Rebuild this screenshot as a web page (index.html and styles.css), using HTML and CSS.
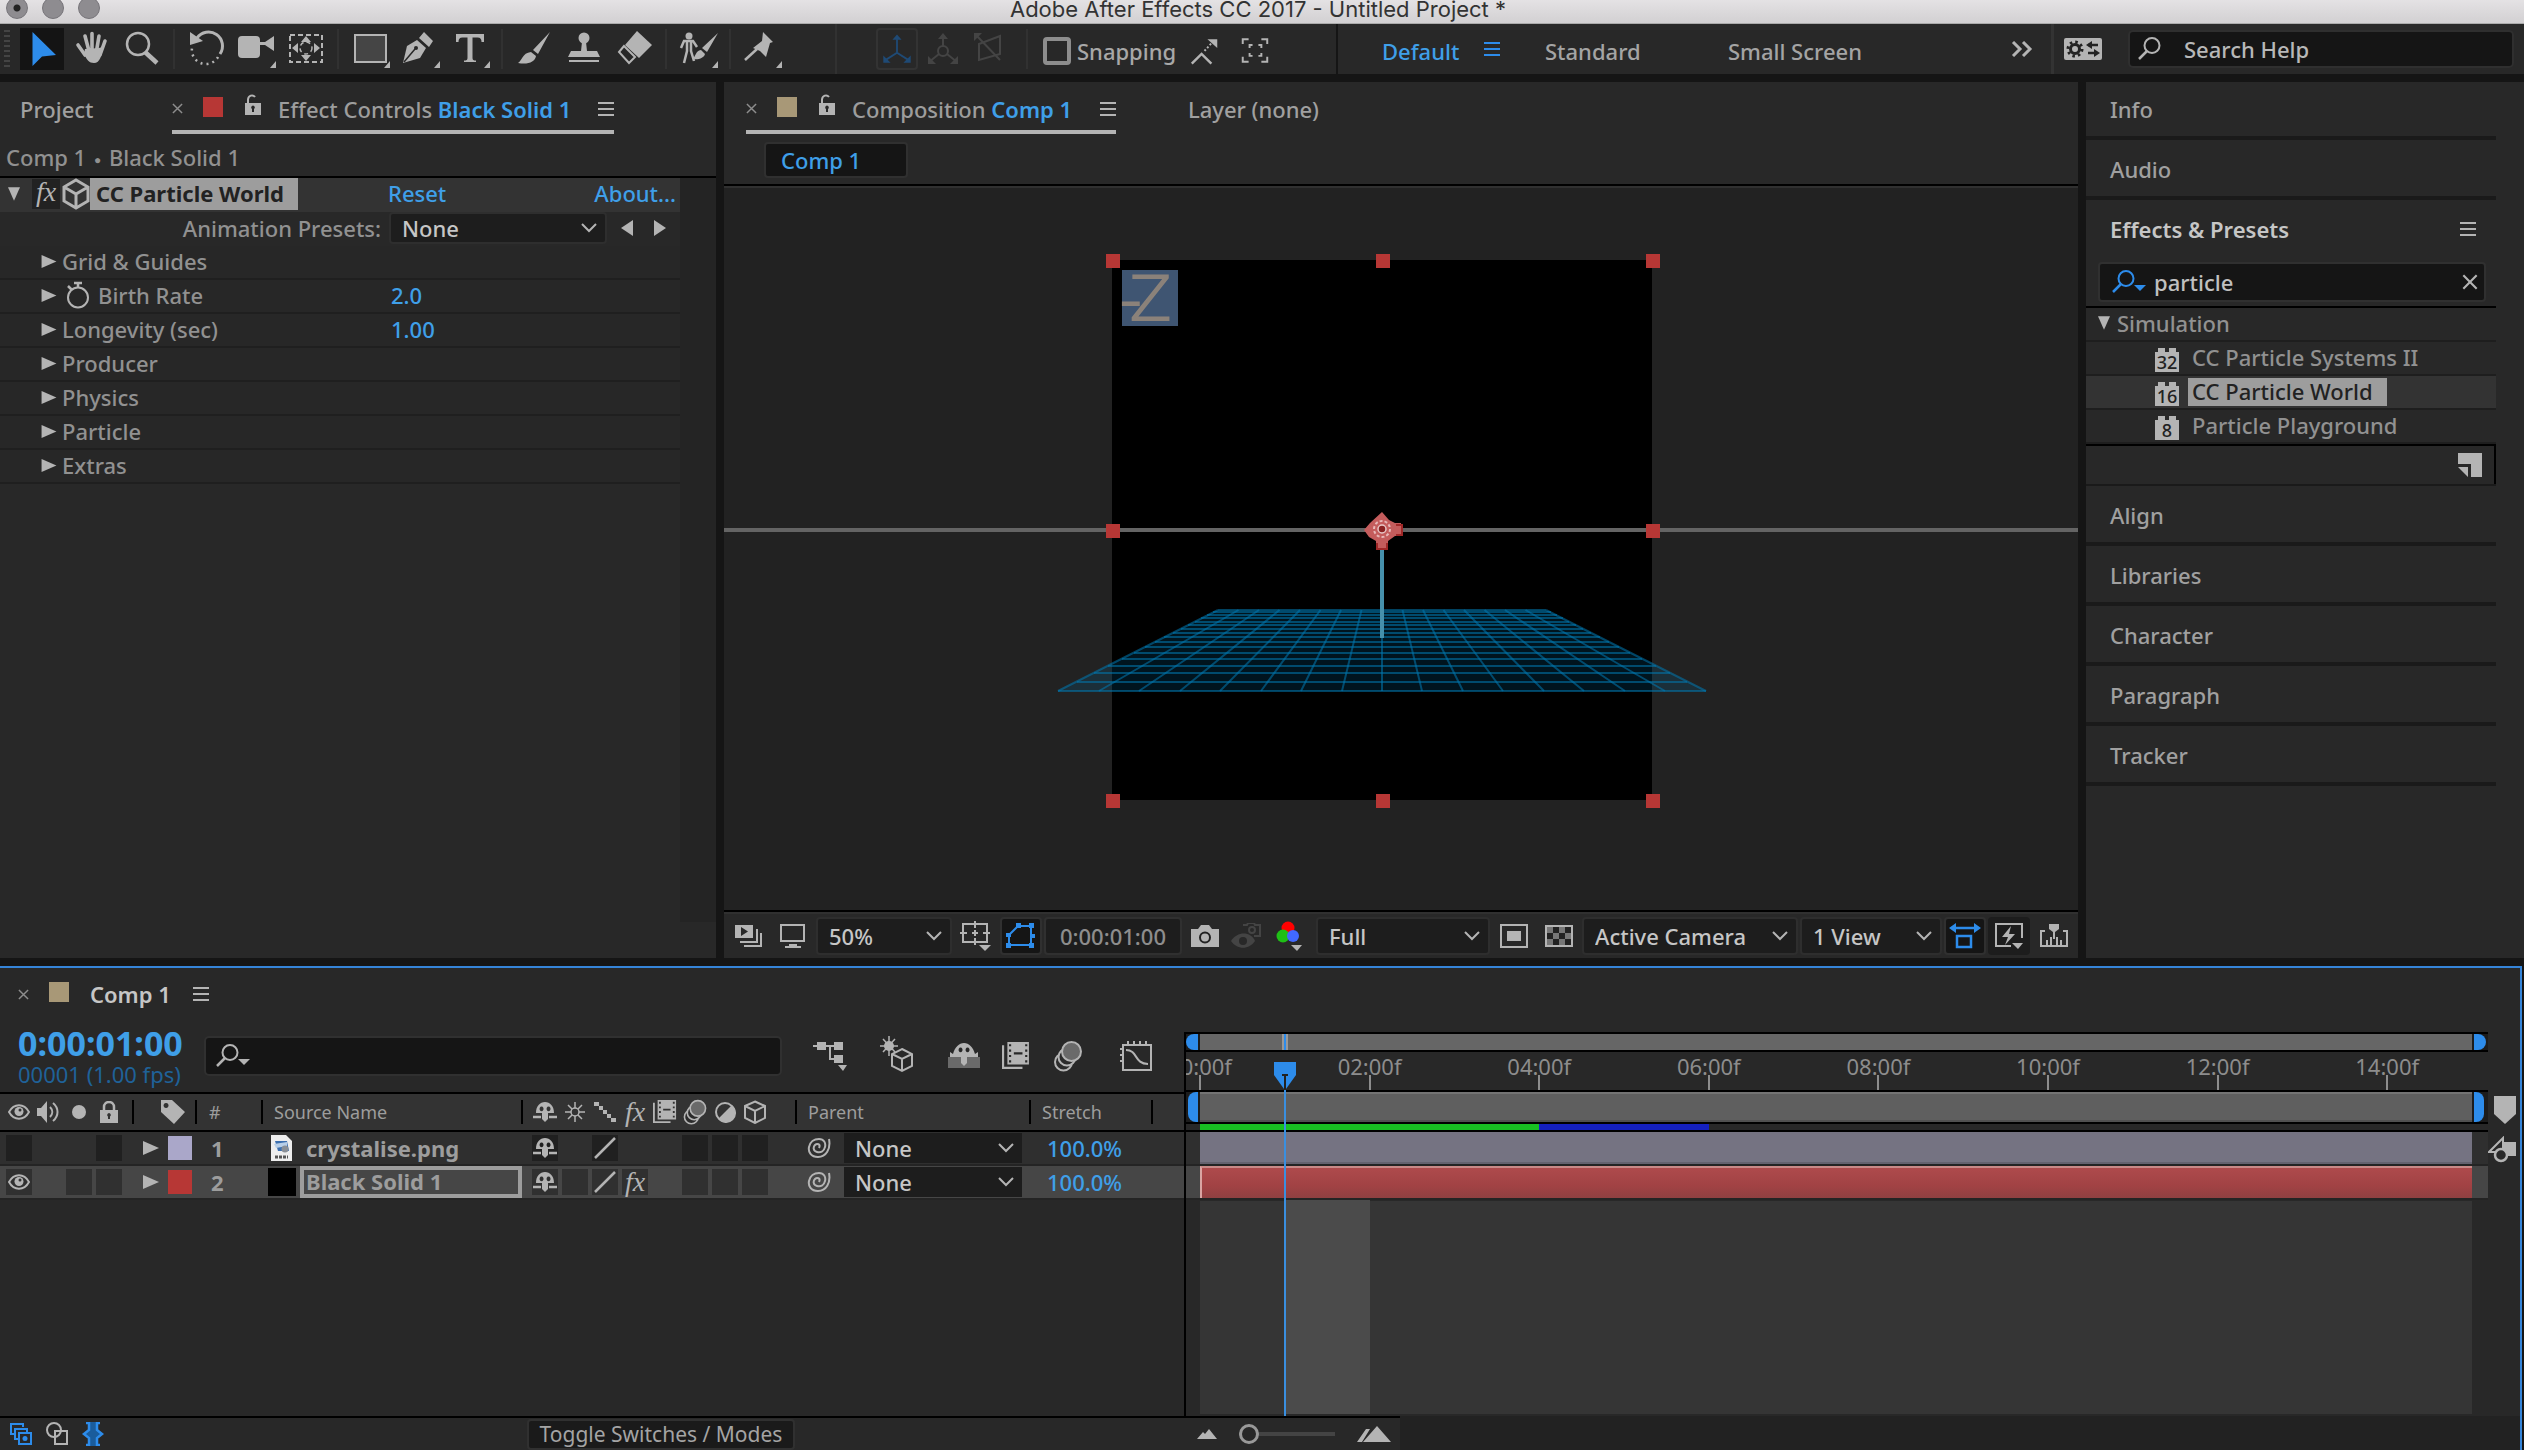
FILE: index.html
```html
<!DOCTYPE html>
<html lang="en">
<head>
<meta charset="utf-8">
<title>Adobe After Effects CC 2017 - Untitled Project *</title>
<link rel="stylesheet" href="styles.css">
</head>
<body>
<svg class="defs" aria-hidden="true">
  <symbol id="i-menu" viewBox="0 0 16 14"><path d="M0 1h16M0 7h16M0 13h16" stroke="currentColor" stroke-width="2"/></symbol>
  <symbol id="i-close" viewBox="0 0 12 12"><path d="M1 1l10 10M11 1L1 11" stroke="currentColor" stroke-width="1.6"/></symbol>
  <symbol id="i-lock" viewBox="0 0 18 22"><path d="M4 10V5.500A4 4.500 0 0 1 11 3" fill="none" stroke="currentColor" stroke-width="2"/><path fill="currentColor" fill-rule="evenodd" d="M1 9h16v12H1zM9 11.500a2 2 0 0 0-1 3.600V18h2v-2.900a2 2 0 0 0-1-3.600z"/></symbol>
  <symbol id="i-chev" viewBox="0 0 16 10"><path d="M1 1l7 7 7-7" fill="none" stroke="currentColor" stroke-width="2"/></symbol>
  <symbol id="i-right" viewBox="0 0 16 14"><path d="M0 0l16 7-16 7z" fill="currentColor"/></symbol>
  <symbol id="i-down" viewBox="0 0 14 16"><path d="M0 0h14L7 16z" fill="currentColor"/></symbol>
  <symbol id="i-search" viewBox="0 0 34 24"><circle cx="14" cy="8.500" r="7.500" fill="none" stroke="currentColor" stroke-width="2"/><path d="M9 14l-8 8" stroke="currentColor" stroke-width="2.500"/></symbol>
  <symbol id="i-searchmenu" viewBox="0 0 34 24"><circle cx="14" cy="8.500" r="7.500" fill="none" stroke="currentColor" stroke-width="2"/><path d="M9 14l-8 8" stroke="currentColor" stroke-width="2.500"/><path d="M22 15h12l-6 6z" fill="currentColor"/></symbol>
  <symbol id="i-cube" viewBox="0 0 28 32"><path d="M14 2l12 7v14l-12 7-12-7V9zM2 9l12 7 12-7M14 16v14" fill="none" stroke="currentColor" stroke-width="3"/></symbol>
  <symbol id="i-cubethin" viewBox="0 0 24 24"><path d="M12 1.500l10 4.500v12l-10 5-10-5V6zM2 6l10 5 10-5M12 11v12" fill="none" stroke="currentColor" stroke-width="2"/></symbol>
  <symbol id="i-shy" viewBox="0 0 24 20"><path fill="currentColor" fill-rule="evenodd" d="M3 11C3 4 7 0 12 0s9 4 9 11zM8.500 4.500a2 2.400 0 1 0 .1 0zM15.500 4.500a2 2.400 0 1 0 .1 0z"/><path d="M0 15h8M16 15h8" stroke="currentColor" stroke-width="2.500"/><path d="M9 10h6v7l-3 3-3-3z" fill="currentColor"/></symbol>
  <symbol id="i-slash" viewBox="0 0 24 24"><path d="M2 22L22 2" stroke="currentColor" stroke-width="2.500"/></symbol>
  <symbol id="i-eye" viewBox="0 0 22 16"><path d="M1 8c5-9 15-9 20 0-5 9-15 9-20 0z" fill="none" stroke="currentColor" stroke-width="2"/><circle cx="11" cy="7.500" r="4.500" fill="currentColor"/><circle cx="12" cy="6" r="1.500" fill="#333"/></symbol>
  <symbol id="i-whip" viewBox="0 0 24 24"><path d="M22 3c2 10-3 18-11 18C4 21 1 16 2 11S7 3 12 3s7 4 6 8-4 6-8 5-4-5-2-7 6-1 4 3" fill="none" stroke="currentColor" stroke-width="2"/></symbol>
  <symbol id="i-film" viewBox="0 0 26 26"><path d="M1 3v21h18" fill="none" stroke="currentColor" stroke-width="2"/><path fill="currentColor" fill-rule="evenodd" d="M5 0h20v21H5zM6.500 2v2h2V2zm0 5v2h2V7zm0 5v2h2v-2zm0 5v2h2v-2zM21.500 2v2h2V2zm0 5v2h2V7zm0 5v2h2v-2zm0 5v2h2v-2zM11 9.500v2h8v-2z"/></symbol>
  <symbol id="i-blur" viewBox="0 0 28 32"><circle cx="9.500" cy="22" r="8.500" fill="#2b2b2b" stroke="currentColor" stroke-width="2"/><circle cx="13" cy="17" r="8.500" fill="#2b2b2b" stroke="currentColor" stroke-width="2"/><circle cx="17.500" cy="11.500" r="9.500" fill="#6a6a6a" stroke="currentColor" stroke-width="2"/></symbol>
</svg>

<header class="titlebar">
  <div class="lights"><span class="light light-dot"></span><span class="light"></span><span class="light"></span></div>
  <h1 class="title">Adobe After Effects CC 2017 - Untitled Project *</h1>
</header>

<nav class="toolbar" aria-label="Tools">
  <span class="grip"></span>
  <button class="tool tool-on" aria-label="Selection"><svg viewBox="0 0 50 50"><path d="M15.500 8l23.500 23-14 1.500-9.500 9.500z" fill="#2d8ceb"/></svg></button>
  <button class="tool" aria-label="Hand"><svg viewBox="0 0 50 50"><g stroke="currentColor" stroke-width="3.600" stroke-linecap="round" fill="none"><path d="M18 12l4 15M25 9.500V26M32 12l-2.500 15M11 21l7 10M38 17l-5 14"/></g><path d="M18 25l14-1 4-1c-1 8-3 16-9 16-5 0-7-3-10-9z" fill="currentColor"/></svg></button>
  <button class="tool" aria-label="Zoom"><svg viewBox="0 0 50 50"><circle cx="21" cy="20" r="11" fill="none" stroke="currentColor" stroke-width="2.500"/><path d="M28 28l12 11" stroke="currentColor" stroke-width="4.500"/></svg></button>
  <span class="sep"></span>
  <button class="tool" aria-label="Rotate"><svg viewBox="0 0 50 50"><path d="M16 14a14 14 0 0 1 23 16" fill="none" stroke="currentColor" stroke-width="3"/><path d="M37 33a14 14 0 0 1-26-9" fill="none" stroke="currentColor" stroke-width="2.500" stroke-dasharray="2 4"/><path d="M9 8v13l13-4z" fill="currentColor"/></svg></button>
  <button class="tool" aria-label="Camera"><svg viewBox="0 0 50 50"><rect x="7" y="12" width="22" height="22" rx="4" fill="currentColor"/><path d="M29 18h5l9-6v15l-9-6h-5zM45 37v7h-6z" fill="currentColor"/></svg></button>
  <button class="tool" aria-label="Pan behind"><svg viewBox="0 0 50 50"><rect x="9" y="11" width="32" height="27" fill="none" stroke="currentColor" stroke-width="2" stroke-dasharray="5 3"/><path d="M25 12l5 6H20zM25 37l5-6H20zM11 24l6-5v10zM39 24l-6-5v10z" fill="currentColor"/><circle cx="25" cy="24" r="6" fill="none" stroke="currentColor" stroke-width="1.500" stroke-dasharray="4 3"/></svg></button>
  <span class="sep"></span>
  <button class="tool" aria-label="Rectangle"><svg viewBox="0 0 50 50"><rect x="10" y="11" width="31" height="27" fill="#454545" stroke="currentColor" stroke-width="2"/><path d="M45 37v7h-6z" fill="currentColor"/></svg></button>
  <button class="tool" aria-label="Pen"><svg viewBox="0 0 50 50"><path d="M8 39l4-17 10-6 9 8-6 10z" fill="currentColor"/><path d="M9 38l11-13" stroke="#282828" stroke-width="1.500"/><circle cx="21" cy="24" r="2" fill="#282828"/><path d="M24 14l5-6 9 9-4 6zM45 37v7h-6z" fill="currentColor"/></svg></button>
  <button class="tool" aria-label="Type"><svg viewBox="0 0 50 50"><path d="M11 10h28v8h-2.500c0-3-1-4.500-4-4.500H27.500V34c0 2 1 2.500 3.500 2.500V38H19v-1.500c2.500 0 3.500-.5 3.500-2.500V13.500H17.500c-3 0-4 1.500-4 4.500H11zM45 37v7h-6z" fill="currentColor"/></svg></button>
  <span class="sep"></span>
  <button class="tool" aria-label="Brush"><svg viewBox="0 0 50 50"><path d="M41 8L29 30l-5-4zM22 28l5 4c-1 6-8 9-18 7 4-2 4-10 13-11z" fill="currentColor"/></svg></button>
  <button class="tool" aria-label="Clone stamp"><svg viewBox="0 0 50 50"><circle cx="25" cy="14" r="5.500" fill="currentColor"/><path d="M23 18h4l1 9h10l3 6H9l3-6h10zM10 36h30v2H10z" fill="currentColor"/></svg></button>
  <button class="tool" aria-label="Eraser"><svg viewBox="0 0 50 50"><path d="M28 7l15 14-13 13-14-13z" fill="currentColor"/><path d="M15 22l-5 6 10 11 6-6z" fill="none" stroke="currentColor" stroke-width="2"/></svg></button>
  <span class="sep"></span>
  <button class="tool" aria-label="Roto brush"><svg viewBox="0 0 50 50"><circle cx="16" cy="12" r="3.500" fill="currentColor"/><path d="M8 24l3-7h9l4 6M14 17v10l-3 12M18 17v10l3 10" fill="none" stroke="currentColor" stroke-width="2.500"/><path d="M45 9L34 28l-5-4zM28 26l4 4c-1 4-6 6-13 5 4-2 3-8 9-9zM45 37v7h-6z" fill="currentColor"/></svg></button>
  <span class="sep"></span>
  <button class="tool" aria-label="Puppet pin"><svg viewBox="0 0 50 50"><path d="M26 8l10 10-3 1-4 14-6-6-7-3 9-7z" fill="currentColor"/><path d="M20 25L8 36" stroke="currentColor" stroke-width="2.500"/><path d="M45 37v7h-6z" fill="currentColor"/></svg></button>
  <span class="sep sep-strong"></span>
  <button class="tool axis axis-on" aria-label="Local axis"><svg viewBox="0 0 46 50"><path d="M23 12v17L9 38M23 29l14 9" fill="none" stroke="currentColor" stroke-width="2"/><path d="M23 9l5 6H18zM8 32v8h8zM38 32v8h-8z" fill="currentColor"/></svg></button>
  <button class="tool axis" aria-label="World axis"><svg viewBox="0 0 46 50"><path d="M23 12v11M19 30L9 38M27 30l10 8" fill="none" stroke="currentColor" stroke-width="2"/><circle cx="23" cy="27" r="5" fill="none" stroke="currentColor" stroke-width="2"/><path d="M23 9l5 6H18zM8 32v8h8zM38 32v8h-8z" fill="currentColor"/></svg></button>
  <button class="tool axis" aria-label="View axis"><svg viewBox="0 0 46 50"><path d="M13 20l21-8v18l-21 6zM10 11l24 25" fill="none" stroke="currentColor" stroke-width="2"/><path d="M8 9h8l-8 8z" fill="currentColor"/></svg></button>
  <span class="sep sep-axis"></span>
  <label class="snap"><input type="checkbox" class="snap-box">Snapping</label>
  <button class="tool tool-mini" aria-label="Snap to edges"><svg viewBox="0 0 50 50"><path d="M11 40l10-10 10 10" fill="none" stroke="currentColor" stroke-width="2.500"/><path d="M24 27l8-9" stroke="currentColor" stroke-width="2" stroke-dasharray="2 2"/><path d="M27 15h10v9z" fill="currentColor"/></svg></button>
  <button class="tool tool-mini" aria-label="Snap to features"><svg viewBox="0 0 50 50"><path d="M13 20v-5h6M32 15h6v5M38 33v5h-6M19 38h-6v-5M20 24v-3h3M29 21h3v3M32 29v3h-3M23 32h-3v-3" fill="none" stroke="currentColor" stroke-width="2"/></svg></button>
  <div class="workspaces">
    <a class="ws ws-on" href="#">Default</a>
    <button class="ws-menu" aria-label="Workspace menu"><svg width="16" height="14"><use href="#i-menu"/></svg></button>
    <a class="ws ws-standard" href="#">Standard</a>
    <a class="ws ws-small" href="#">Small Screen</a>
    <button class="more" aria-label="More workspaces"><svg width="22" height="16" viewBox="0 0 22 16"><path d="M2 1l7 7-7 7M12 1l7 7-7 7" fill="none" stroke="currentColor" stroke-width="3"/></svg></button>
  </div>
  <button class="sync" aria-label="Sync settings"><svg width="38" height="22" viewBox="0 0 38 22"><rect width="38" height="22" rx="2" fill="currentColor"/><circle cx="11" cy="11" r="4.500" fill="none" stroke="#222" stroke-width="3"/><circle cx="11" cy="11" r="7" fill="none" stroke="#222" stroke-width="3" stroke-dasharray="2.500 3"/><path d="M24 7h10M24 15h8" stroke="#222" stroke-width="2.500"/><path d="M22 7l6-4v8zM36 15l-6-4v8z" fill="#222"/></svg></button>
  <label class="help"><svg width="34" height="24"><use href="#i-search"/></svg><input type="text" aria-label="Search Help" value="Search Help"></label>
</nav>

<main class="panels">
  <section class="panel effects">
    <div class="tabs">
      <a class="tab tab-project" href="#">Project</a>
      <div class="tab-active tab-effects">
        <button class="x" aria-label="Close"><svg width="11" height="11"><use href="#i-close"/></svg></button>
        <span class="swatch red"></span>
        <svg class="lock" width="18" height="22"><use href="#i-lock"/></svg>
        <span>Effect Controls <b class="accent">Black Solid 1</b></span>
        <svg class="menu" width="16" height="14"><use href="#i-menu"/></svg>
      </div>
    </div>
    <p class="crumb">Comp 1 <span class="dot">●</span> Black Solid 1</p>
    <div class="fx-list">
      <div class="fx-head">
        <svg class="fx-open" width="12" height="16"><use href="#i-down"/></svg>
        <span class="fx">fx</span>
        <svg width="28" height="32"><use href="#i-cube"/></svg>
        <span class="fx-name">CC Particle World</span>
        <a class="accent" href="#">Reset</a>
        <a class="accent about" href="#">About...</a>
      </div>
      <div class="preset">
        <label for="preset">Animation Presets:</label>
        <span class="pick"><select id="preset"><option>None</option></select><svg width="16" height="10"><use href="#i-chev"/></svg></span>
        <button aria-label="Previous preset"><svg width="12" height="16" viewBox="0 0 12 16"><path d="M12 0v16L0 8z" fill="currentColor"/></svg></button>
        <button aria-label="Next preset"><svg width="12" height="16" viewBox="0 0 12 16"><path d="M0 0v16l12-8z" fill="currentColor"/></svg></button>
      </div>
      <div class="prop"><svg width="16" height="13"><use href="#i-right"/></svg><span>Grid &amp; Guides</span></div>
      <div class="prop"><svg width="16" height="13"><use href="#i-right"/></svg><span class="watch"><svg width="24" height="28" viewBox="0 0 24 28"><circle cx="12" cy="16.500" r="10" fill="none" stroke="currentColor" stroke-width="2"/><path d="M8 2h8M12 2v4M2 5l4 4" stroke="currentColor" stroke-width="2.500"/></svg>Birth Rate</span><a class="accent" href="#">2.0</a></div>
      <div class="prop"><svg width="16" height="13"><use href="#i-right"/></svg><span>Longevity (sec)</span><a class="accent" href="#">1.00</a></div>
      <div class="prop"><svg width="16" height="13"><use href="#i-right"/></svg><span>Producer</span></div>
      <div class="prop"><svg width="16" height="13"><use href="#i-right"/></svg><span>Physics</span></div>
      <div class="prop"><svg width="16" height="13"><use href="#i-right"/></svg><span>Particle</span></div>
      <div class="prop"><svg width="16" height="13"><use href="#i-right"/></svg><span>Extras</span></div>
    </div>
  </section>

  <section class="panel comp">
    <div class="tabs tabs-comp">
      <div class="tab-active tab-comp">
        <button class="x" aria-label="Close"><svg width="11" height="11"><use href="#i-close"/></svg></button>
        <span class="swatch tan"></span>
        <svg class="lock" width="18" height="22"><use href="#i-lock"/></svg>
        <span>Composition <b class="accent">Comp 1</b></span>
        <svg class="menu" width="16" height="14"><use href="#i-menu"/></svg>
      </div>
      <a class="tab tab-layer" href="#">Layer (none)</a>
    </div>
    <div class="flow"><button class="flow-btn">Comp 1</button></div>
    <div class="viewer">
      <svg class="stage" viewBox="724 186 1354 724" preserveAspectRatio="xMidYMid slice" role="img" aria-label="Composition view">
        <rect x="1112" y="260" width="540" height="540" fill="#000"/>
        <path d="M1218 610h328l160 81H1058z" fill="#0070a8" fill-opacity=".18"/>
        <g fill="none" stroke="#0078b0" stroke-opacity=".55" stroke-width="2">
          <path d="M1058 691H1706M1077 682H1687M1094 673H1670M1108 666H1656M1122 659H1642M1134 653H1630M1145 647H1619M1155 642H1609M1164 637H1600M1173 633H1591M1181 629H1583M1188 625H1576M1195 622H1569M1201 618H1563M1207 615H1557M1213 612H1551M1218 610H1546"/>
          <path d="M1218 610L1058 691M1238.500 610L1099 691M1259 610L1139 691M1279.500 610L1180 691M1300 610L1220 691M1320.500 610L1261 691M1341 610L1301 691M1361.500 610L1342 691M1382 610V691M1402.500 610L1422 691M1423 610L1463 691M1443.500 610L1503 691M1464 610L1544 691M1484.500 610L1584 691M1505 610L1625 691M1525.500 610L1665 691M1546 610L1706 691"/>
        </g>
        <path d="M724 530H2078" stroke="#646464" stroke-width="4"/>
        <path d="M1382 548V638" stroke="#4590ab" stroke-width="4"/>
        <rect x="1122" y="270" width="56" height="56" fill="#3f5572"/>
        <text class="axis-letter" y="320"><tspan x="1120">-</tspan><tspan x="1130">Z</tspan></text>
        <g fill="#b73735">
          <path d="M1106 254h14v14h-14zM1376 254h14v14h-14zM1646 254h14v14h-14zM1106 524h14v14h-14zM1646 524h14v14h-14zM1106 794h14v14h-14zM1376 794h14v14h-14zM1646 794h14v14h-14z"/>
        </g>
        <path d="M1382 512l7 8 6 3h6v13h-6l-7 5v8h-12v-8l-7-4-5-7 6-7z" fill="#c45c5c"/>
        <circle cx="1382" cy="529" r="8" fill="none" stroke="#e8b8b8" stroke-width="2" stroke-dasharray="3 2"/>
        <circle cx="1382" cy="529" r="4" fill="#8a2222" stroke="#e8c8c8" stroke-width="1.500"/>
        <path d="M1396 525h6v10h-6M1377 543v6h10v-6" fill="none" stroke="#a02828" stroke-width="2"/>
      </svg>
    </div>
    <div class="viewbar">
      <button class="vb w42" aria-label="Always preview"><svg width="28" height="24" viewBox="0 0 28 24"><path fill="currentColor" fill-rule="evenodd" d="M0 1h18v13H0zM6 3v9l7-4.500z"/><path d="M22 5v13H5M26 9v13H9" fill="none" stroke="currentColor" stroke-width="2"/></svg></button>
      <button class="vb w42" aria-label="Primary viewer"><svg width="26" height="24" viewBox="0 0 26 24"><rect x="1" y="1" width="23" height="16" fill="none" stroke="currentColor" stroke-width="2"/><path d="M9 20h8v2h4v2H5v-2h4z" fill="currentColor"/></svg></button>
      <span class="pick w136"><select aria-label="Magnification"><option>50%</option></select><svg width="16" height="10"><use href="#i-chev"/></svg></span>
      <button class="vb w44" aria-label="Grid options"><svg width="32" height="30" viewBox="0 0 32 30"><path d="M3 3h24v18H3zM15 0v7M15 17v7M0 12h7M23 12h7M12 12h6M15 9v6" fill="none" stroke="currentColor" stroke-width="2"/><path d="M19 24h12l-6 6z" fill="currentColor"/></svg></button>
      <button class="vb vb-on w42" aria-label="Mask visibility"><svg width="30" height="26" viewBox="0 0 30 26"><path d="M3 22V12L12 3h13v19z" fill="none" stroke="currentColor" stroke-width="2"/><path d="M0 20h5v5H0zM10 0h5v5h-5zM23 0h5v5h-5zM23 20h5v5h-5zM0 10h5v4H0zM24 11h5v4h-5z" fill="currentColor"/></svg></button>
      <button class="vb vb-time">0:00:01:00</button>
      <button class="vb w42" aria-label="Take snapshot"><svg width="28" height="22" viewBox="0 0 28 22"><path fill="currentColor" d="M0 4h7l3-4h8l3 4h7v18H0z"/><circle cx="14" cy="12.500" r="5" fill="currentColor" stroke="#222" stroke-width="2"/></svg></button>
      <button class="vb vb-off w36" aria-label="Show snapshot"><svg width="30" height="26" viewBox="0 0 30 26"><path d="M0 18c6-10 20-10 24 0-6 9-18 9-24 0z" fill="currentColor"/><circle cx="12" cy="18" r="4" fill="#282828"/><path d="M12 2h4l1-2h6l1 2h5v11h-6" fill="none" stroke="currentColor" stroke-width="2"/><circle cx="21" cy="7" r="3" fill="none" stroke="currentColor" stroke-width="2"/></svg></button>
      <button class="vb w48" aria-label="Show channel"><svg width="28" height="30" viewBox="0 0 28 30"><circle cx="12" cy="7" r="6.500" fill="#f00"/><circle cx="7" cy="15" r="6.500" fill="#1fbf16"/><circle cx="17" cy="15" r="6" fill="#4169ff"/><path d="M15 24h11l-5 6z" fill="currentColor"/></svg></button>
      <span class="pick w174"><select aria-label="Resolution"><option>Full</option></select><svg width="16" height="10"><use href="#i-chev"/></svg></span>
      <button class="vb w44" aria-label="Region of interest"><svg width="28" height="24" viewBox="0 0 28 24"><path d="M1 1h26v22H1z" fill="none" stroke="currentColor" stroke-width="2"/><path d="M7 7h14v10H7z" fill="currentColor"/></svg></button>
      <button class="vb w42" aria-label="Transparency grid"><svg width="28" height="22" viewBox="0 0 28 22"><path d="M1 1h26v20H1z" fill="#222" stroke="currentColor" stroke-width="2"/><path d="M2 2h6v6H2zM14 2h6v6h-6zM8 8h6v6H8zM20 8h6v6h-6zM2 14h6v6H2zM14 14h6v6h-6z" fill="#777"/></svg></button>
      <span class="pick w216"><select aria-label="3D view"><option>Active Camera</option></select><svg width="16" height="10"><use href="#i-chev"/></svg></span>
      <span class="pick w142"><select aria-label="View layout"><option>1 View</option></select><svg width="16" height="10"><use href="#i-chev"/></svg></span>
      <button class="vb vb-on w42" aria-label="Pixel aspect ratio"><svg width="32" height="26" viewBox="0 0 32 26"><path d="M5 5h22M8 13h14v11H8z" fill="none" stroke="currentColor" stroke-width="2.500"/><path d="M0 5l7-5v10zM32 5l-7-5v10z" fill="currentColor"/></svg></button>
      <button class="vb vb-dark w42" aria-label="Fast previews"><svg width="28" height="26" viewBox="0 0 28 26"><path d="M27 15V1H1v22h15" fill="none" stroke="currentColor" stroke-width="2"/><path d="M16 3L7 14h6l-3 8 10-11h-6zM17 20h11l-5 6z" fill="currentColor"/></svg></button>
      <button class="vb w44" aria-label="Timeline"><svg width="28" height="24" viewBox="0 0 28 24"><path d="M5 7H1v15h26V7h-4M7 22v-6M11 22v-9M17 22v-9M21 22v-6" fill="none" stroke="currentColor" stroke-width="2"/><path d="M9 0h10v5l-4 3v7h-2V8L9 5z" fill="currentColor"/></svg></button>
    </div>
  </section>

  <aside class="panel side">
    <h2 class="fold">Info</h2>
    <h2 class="fold">Audio</h2>
    <section class="presets">
      <h2 class="presets-title">Effects &amp; Presets<svg width="16" height="14"><use href="#i-menu"/></svg></h2>
      <label class="find"><svg width="34" height="24"><use href="#i-searchmenu"/></svg><input type="text" aria-label="Search effects" value="particle"><button aria-label="Clear"><svg width="16" height="16"><use href="#i-close"/></svg></button></label>
      <ul class="tree">
        <li class="group"><svg width="12" height="16"><use href="#i-down"/></svg>Simulation</li>
        <li class="leaf"><span class="badge">32</span><span class="leaf-name">CC Particle Systems II</span></li>
        <li class="leaf leaf-on"><span class="badge">16</span><span class="leaf-name">CC Particle World</span></li>
        <li class="leaf"><span class="badge">8</span><span class="leaf-name">Particle Playground</span></li>
      </ul>
      <div class="presets-foot"><button aria-label="New preset"><svg width="24" height="24" viewBox="0 0 24 24"><path d="M0 0h24v24H13V11H0zM0 14h10v10z" fill="currentColor"/></svg></button></div>
    </section>
    <h2 class="fold">Align</h2>
    <h2 class="fold">Libraries</h2>
    <h2 class="fold">Character</h2>
    <h2 class="fold">Paragraph</h2>
    <h2 class="fold">Tracker</h2>
  </aside>
</main>

<section class="timeline">
  <div class="tl-tab">
    <button class="x" aria-label="Close"><svg width="11" height="11"><use href="#i-close"/></svg></button>
    <span class="swatch tan"></span>
    <span class="tl-name">Comp 1</span>
    <svg width="16" height="14"><use href="#i-menu"/></svg>
  </div>
  <div class="tl-main">
    <div class="tl-left">
      <div class="tl-head">
        <div class="clock"><strong>0:00:01:00</strong><span>00001 (1.00 fps)</span></div>
        <label class="tl-find"><svg width="34" height="26"><use href="#i-searchmenu"/></svg><input type="text" aria-label="Search layers"></label>
        <div class="tl-tools">
          <button aria-label="Mini flowchart"><svg width="34" height="30" viewBox="0 0 34 30"><path d="M0 5h26M17 5v13h8" fill="none" stroke="currentColor" stroke-width="2"/><path d="M4 1h9v8H4zM21 1h9v8h-9zM21 14h9v8h-9zM25 24h9l-4 6z" fill="currentColor"/></svg></button>
          <button aria-label="Draft 3D"><svg width="34" height="40" viewBox="0 0 34 40"><path d="M9 0v20M0 10h18M3 3l12 13M15 3L3 16" stroke="currentColor" stroke-width="1.500"/><circle cx="9" cy="10" r="5" fill="currentColor"/><path d="M22 13l10 5v12l-10 5-10-5V18zM12 18l10 5 10-5M22 23v12" fill="#282828" stroke="currentColor" stroke-width="2"/></svg></button>
          <button aria-label="Hide shy layers"><svg width="32" height="26" viewBox="0 0 32 26"><path d="M0 14h32v11H0z" fill="#6a6a6a"/><path fill="currentColor" fill-rule="evenodd" d="M2 14V9l3 2C7 4 11 0 16 0s9 4 11 11l3-2v5zM12.500 4.500a2 2.400 0 1 0 .1 0zM19.500 4.500a2 2.400 0 1 0 .1 0z"/><path d="M13 14h6v6l-3 3-3-3z" fill="currentColor"/></svg></button>
          <button aria-label="Frame blending"><svg width="28" height="30" viewBox="0 0 26 26"><use href="#i-film"/></svg></button>
          <button aria-label="Motion blur"><svg width="28" height="32"><use href="#i-blur"/></svg></button>
          <button aria-label="Graph editor"><svg width="32" height="32" viewBox="0 0 32 32"><path d="M3 5h28v25H3zM0 9h3M0 15h3M0 21h3M8 1v4M14 1v4M20 1v4M26 1v4M6 10c12 0 8 14 22 14" fill="none" stroke="currentColor" stroke-width="2"/></svg></button>
        </div>
      </div>
      <table class="layers">
        <colgroup><col class="c-av"><col class="c-label"><col class="c-num"><col class="c-name"><col class="c-sw"><col class="c-parent"><col class="c-stretch"><col></colgroup>
        <thead><tr>
          <th><div class="cells"><span><svg width="22" height="16"><use href="#i-eye"/></svg></span><span><svg width="24" height="22" viewBox="0 0 24 22"><path d="M0 7h4l6-7v22l-6-7H0z" fill="currentColor"/><path d="M13 6c3 3 3 7 0 10M16 2c6 5 6 13 0 18" fill="none" stroke="currentColor" stroke-width="2"/></svg></span><span><svg width="14" height="14" viewBox="0 0 14 14"><circle cx="7" cy="7" r="7" fill="currentColor"/></svg></span><span><svg width="18" height="22" viewBox="0 0 18 22"><path d="M4 10V6a5 5 0 0 1 10 0v4" fill="none" stroke="currentColor" stroke-width="2.500"/><path fill="currentColor" fill-rule="evenodd" d="M0 9h18v13H0zM9 12a2 2 0 0 0-1 3.600V18h2v-2.400A2 2 0 0 0 9 12z"/></svg></span></div></th>
          <th><svg class="tag" width="24" height="24" viewBox="0 0 24 24"><path fill="currentColor" fill-rule="evenodd" d="M0 0h11l13 12-11 12L0 12zM5 3a2.500 2.500 0 1 0 .1 0z"/></svg></th>
          <th class="hash">#</th>
          <th class="src">Source Name</th>
          <th><div class="cells"><span><svg width="24" height="20"><use href="#i-shy"/></svg></span><span><svg width="20" height="20" viewBox="0 0 20 20"><path d="M10 0v20M0 10h20M3 3l14 14M17 3L3 17" stroke="currentColor" stroke-width="1.500"/><circle cx="10" cy="10" r="4" fill="#333" stroke="currentColor" stroke-width="1.500"/></svg></span><span><svg width="22" height="20" viewBox="0 0 22 20"><path d="M0 0h5v4H0zM5 4h4v4H5zM9 8h4v4H9zM13 12h4v4h-4zM17 16h5v4h-5z" fill="currentColor"/></svg></span><span class="fx">fx</span><span><svg width="24" height="24"><use href="#i-film"/></svg></span><span><svg width="26" height="26"><use href="#i-blur"/></svg></span><span><svg width="22" height="22" viewBox="0 0 22 22"><circle cx="11" cy="11" r="9" fill="none" stroke="currentColor" stroke-width="2"/><path d="M18 4A10 10 0 1 1 4 18z" fill="currentColor"/></svg></span><span><svg width="24" height="24"><use href="#i-cubethin"/></svg></span></div></th>
          <th class="par">Parent</th>
          <th class="par">Stretch</th>
          <th></th>
        </tr></thead>
        <tbody>
          <tr>
            <td><div class="cells"><span class="well"></span><span></span><span></span><span class="well"></span></div></td>
            <td><div class="label"><svg width="16" height="14"><use href="#i-right"/></svg><i class="chip lilac"></i></div></td>
            <td class="num">1</td>
            <td><div class="name"><svg width="22" height="26" viewBox="0 0 22 26"><path d="M0 0h15l6 6v20H0z" fill="#eee"/><path d="M4 6h12l2 10H7z" fill="#3c6fb0"/><path d="M3 9l13-2v4L5 13z" fill="#b8cfe8"/><circle cx="14" cy="14" r="3.500" fill="#8a8f96"/><path d="M4 22h13" stroke="#555" stroke-width="3" stroke-dasharray="3 1"/></svg><span>crystalise.png</span></div></td>
            <td><div class="cells"><span class="well"><svg width="24" height="20"><use href="#i-shy"/></svg></span><span></span><span class="well"><svg width="24" height="24"><use href="#i-slash"/></svg></span><span></span><span></span><span class="well"></span><span class="well"></span><span class="well"></span></div></td>
            <td><div class="parent"><svg width="24" height="24"><use href="#i-whip"/></svg><span class="pick"><select aria-label="Parent of layer 1"><option>None</option></select><svg width="16" height="10"><use href="#i-chev"/></svg></span></div></td>
            <td class="stretch">100.0%</td>
            <td></td>
          </tr>
          <tr class="sel">
            <td><div class="cells"><span class="well"><svg width="22" height="16"><use href="#i-eye"/></svg></span><span></span><span class="well"></span><span class="well"></span></div></td>
            <td><div class="label"><svg width="16" height="14"><use href="#i-right"/></svg><i class="chip red"></i></div></td>
            <td class="num">2</td>
            <td><div class="name name-on"><i class="solid"></i><span>Black Solid 1</span></div></td>
            <td><div class="cells"><span class="well"><svg width="24" height="20"><use href="#i-shy"/></svg></span><span class="well"></span><span class="well"><svg width="24" height="24"><use href="#i-slash"/></svg></span><span class="well fx">fx</span><span></span><span class="well"></span><span class="well"></span><span class="well"></span></div></td>
            <td><div class="parent"><svg width="24" height="24"><use href="#i-whip"/></svg><span class="pick"><select aria-label="Parent of layer 2"><option>None</option></select><svg width="16" height="10"><use href="#i-chev"/></svg></span></div></td>
            <td class="stretch">100.0%</td>
            <td></td>
          </tr>
        </tbody>
      </table>
    </div>
    <div class="graph">
      <div class="nav"><span class="cap cap-l"></span><span class="nav-bar"></span><span class="cap cap-r"></span></div>
      <div class="ruler"><div class="scale">
        <span style="left:0%">00:00f</span><span style="left:13.333%">02:00f</span><span style="left:26.667%">04:00f</span><span style="left:40%">06:00f</span><span style="left:53.333%">08:00f</span><span style="left:66.667%">10:00f</span><span style="left:80%">12:00f</span><span style="left:93.333%">14:00f</span>
      </div></div>
      <div class="work"><span class="cap cap-l"></span><span class="work-bar"></span><span class="cap cap-r"></span></div>
      <div class="cache"><span class="ram" style="width:26.667%"></span><span class="disk" style="width:13.333%"></span></div>
      <div class="lane"><div class="bar bar-lilac"></div></div>
      <div class="lane lane-on"><div class="bar bar-red"></div></div>
      <div class="lanes-rest"><div class="open"></div></div>
      <div class="over">
        <span class="frame" style="left:6.667%;width:6.667%"></span>
        <span class="nav-mark" style="left:6.667%"></span>
        <span class="playline" style="left:6.667%"></span>
        <svg class="playhead" style="left:6.667%" width="22" height="28" viewBox="0 0 22 28"><path d="M0 0h22v13L12 27h-2L0 13z" fill="#2d8ceb"/><path d="M8 13h6M11 13v14" stroke="#222" stroke-width="2"/></svg>
      </div>
    </div>
    <div class="rail">
      <button aria-label="Marker"><svg width="22" height="28" viewBox="0 0 22 28"><path d="M0 0h22v18L11 28 0 18z" fill="currentColor"/></svg></button>
      <button aria-label="Comp button"><svg width="28" height="28" viewBox="0 0 28 28"><path d="M15 6h13v14H15z" fill="currentColor"/><path d="M15 2L1 16h14z" fill="#282828" stroke="currentColor" stroke-width="2"/><circle cx="13" cy="19" r="6" fill="#282828" stroke="currentColor" stroke-width="2.500"/></svg></button>
    </div>
  </div>
  <footer class="tl-foot">
    <div class="foot-left">
      <button class="foot-icon blue" aria-label="Layer switches"><svg width="22" height="24" viewBox="0 0 22 24"><path d="M5 12H1V2h12v3M9 17H5V7h12v3M9 11h12v11H9z" fill="none" stroke="currentColor" stroke-width="2"/><circle cx="15" cy="16.500" r="2.500" fill="currentColor"/></svg></button>
      <button class="foot-icon" aria-label="Transfer controls"><svg width="22" height="24" viewBox="0 0 22 24"><circle cx="8" cy="8" r="7" fill="none" stroke="currentColor" stroke-width="2"/><path d="M9 9h12v13H9z" fill="none" stroke="currentColor" stroke-width="2"/></svg></button>
      <button class="foot-icon blue" aria-label="In and out panes"><svg width="24" height="24" viewBox="0 0 24 24"><path d="M8 0v8l-4 4 4 4v8h8v-8l4-4-4-4V0z" fill="#1a5c9c"/><path d="M5 1h3v7l-5 4 5 4v7H5M19 1h-3v7l5 4-5 4v7h3" fill="none" stroke="currentColor" stroke-width="2.500"/></svg></button>
      <button class="toggle">Toggle Switches / Modes</button>
    </div>
    <div class="zoomer">
      <svg width="20" height="10" viewBox="0 0 20 10"><path d="M0 10l6-7 2 2 4-5 8 10z" fill="currentColor"/></svg>
      <input type="range" min="0" max="100" value="0" aria-label="Timeline zoom">
      <svg width="34" height="16" viewBox="0 0 34 16"><path d="M0 16L9 3h4L5 16zM6 16L20 0l14 16z" fill="currentColor"/></svg>
    </div>
  </footer>
</section>
</body>
</html>
```
FILE: styles.css
```css
* { box-sizing: border-box; margin: 0; padding: 0; }
body {
  min-height: 100vh;
  display: flex;
  flex-direction: column;
  background: #151515;
  color: #9d9d9d;
  font: 500 22px/32px "Noto Sans", "Open Sans", sans-serif;
}
button, select, input { font: inherit; color: inherit; background: none; border: 0; outline: 0; }
button { display: flex; align-items: center; justify-content: center; }
a { color: inherit; text-decoration: none; }
h1, h2, b { font-weight: inherit; font-size: inherit; }
ul { list-style: none; }
svg { display: block; flex: none; color: #b4b4b4; }
.defs { position: absolute; width: 0; height: 0; }
.accent { color: #3f9fe8; }
.red { background: #b73735; }
.tan { background: #a89877; }
.lilac { background: #aaa7c9; }
.fx { font: italic 28px/26px "Liberation Serif", serif; color: #b4b4b4; text-align: center; }

/* title bar */
.titlebar {
  height: 24px;
  display: flex;
  justify-content: center;
  background: linear-gradient(#e4e2e4, #d2d0d2);
  border-bottom: 1px solid #aaa;
}
.lights { position: absolute; left: 6px; top: -3px; display: flex; gap: 14px; }
.light { width: 22px; height: 22px; border-radius: 50%; background: #8e8c90; border: 1px solid #77757a; }
.light-dot { background: radial-gradient(circle, #222 3px, #8e8c90 4px); }
.title { font: 22px/18px Inter, sans-serif; color: #333; white-space: nowrap; padding-right: 8px; }

/* tool bar */
.toolbar { display: flex; align-items: center; height: 50px; background: #282828; margin-bottom: 8px; }
.grip { width: 6px; height: 38px; margin: 0 7px 0 4px; background: repeating-linear-gradient(#444 0 2px, #282828 2px 5px); }
.tool { width: 50px; height: 50px; flex: none; }
.tool svg { width: 100%; height: 100%; }
.tool-on { background: linear-gradient(#141414, #141414) 50% / 44px 42px no-repeat; }
.sep { width: 14px; height: 40px; flex: none; background: linear-gradient(#313131, #313131) 50% / 2px 100% no-repeat; }
.sep-strong { width: 4px; height: 50px; margin: 0 36px 0 47px; }
.axis { width: 46px; }
.axis svg { color: #444; }
.axis-on { border: 2px solid #333; border-radius: 4px; height: 42px; width: 42px; margin: 0 2px; }
.axis-on svg { color: #1f4a75; width: 42px; height: 50px; }
.sep-axis { margin: 0 8px; }
.snap { display: flex; align-items: center; gap: 6px; width: 139px; color: #a8a8a8; padding: 3px 0 0 1px; }
.snap-box { appearance: none; width: 28px; height: 28px; border: 4px solid #8d8d8d; border-radius: 4px; }
.tool-mini { width: 49px; }
.workspaces { flex: 1; align-self: stretch; display: flex; align-items: center; border-left: 2px solid #151515; border-right: 3px solid #333; margin-left: 57px; padding-left: 44px; color: #a4a4a4; }
.ws { padding-top: 3px; white-space: nowrap; }
.ws-on { color: #3f9fe8; width: 102px; }
.ws-menu svg { color: #2d8ceb; }
.ws-standard { margin-left: 45px; width: 183px; }
.more { margin-left: auto; padding-right: 18px; }
.sync { margin: 0 26px 0 10px; }
.help { display: flex; align-items: center; width: 386px; height: 38px; margin-right: 10px; padding-left: 8px; border: 2px solid #2f2f2f; border-radius: 5px; background: #151515; color: #b8b8b8; }
.help input { width: 280px; padding-left: 12px; }

/* upper panels */
.panels { flex: 1; display: grid; grid-template-columns: 716px minmax(0, 1fr) 438px; column-gap: 8px; padding-bottom: 8px; }
.panel { background: #282828; min-width: 0; }
.tabs { display: flex; height: 52px; padding-left: 20px; }
.tab { line-height: 54px; color: #a0a0a0; }
.tab-project { width: 152px; }
.tab-active { display: flex; align-items: center; border-bottom: 4px solid #b4b4b4; padding-top: 5px; white-space: nowrap; }
.tab-active b { font-weight: 600; }
.x svg { color: #8d8d8d; }
.swatch { width: 20px; height: 20px; margin: 0 21px 4px 20px; flex: none; }
.lock { margin: 0 16px 8px 0; }
.menu { margin-left: auto; }
.tab-effects { width: 442px; }
.tabs-comp { padding-left: 22px; }
.tab-comp { width: 370px; }
.tab-layer { margin-left: 72px; }

.effects { display: flex; flex-direction: column; }
.crumb { padding: 7px 6px 0; height: 42px; color: #919191; }
.dot { font-size: 12px; vertical-align: 2px; padding: 0 2px; }
.fx-list { flex: 1; border-top: 2px solid #000; background: linear-gradient(#242424, #242424) 100% 0 / 36px 100% no-repeat; padding-right: 36px; margin-bottom: 36px; }
.fx-head { display: grid; grid-template-columns: 24px 30px 28px 298px 1fr auto; align-items: center; height: 34px; padding: 0 4px 2px 8px; background: #333; line-height: 30px; }
.fx-head .fx { background: #222; width: 28px; height: 30px; }
.fx-head .accent { align-self: start; }
.fx-name { justify-self: start; height: 32px; width: 208px; padding-left: 6px; background: #9d9d9d; color: #222; font-weight: 700; white-space: nowrap; }
.preset { display: flex; align-items: center; height: 34px; padding-bottom: 2px; color: #919191; background: #282828; }
.preset label { width: 381px; flex: none; text-align: right; margin-right: 8px; }
.preset .pick { width: 218px; height: 32px; margin-right: 14px; }
.preset select { line-height: 28px; }
.preset button { width: 12px; margin-right: 21px; }
.preset button:last-child { margin-right: 0; }
.prop { display: grid; grid-template-columns: 21px 329px 1fr; align-items: center; height: 34px; padding: 0 0 2px 41px; background: #272727; border-bottom: 2px solid #1f1f1f; color: #919191; line-height: 30px; }
.watch { display: flex; align-items: center; gap: 8px; padding-left: 4px; }

.pick { display: grid; align-items: center; border: 2px solid #2e2e2e; border-radius: 4px; background: #1d1d1d; color: #c6c6c6; }
.pick select { grid-area: 1 / 1; width: 100%; appearance: none; padding-left: 11px; }
.pick svg { grid-area: 1 / 1; justify-self: end; margin-right: 8px; pointer-events: none; }

.comp { display: flex; flex-direction: column; }
.flow { padding: 8px 0 6px 40px; height: 50px; }
.flow-btn { width: 144px; height: 36px; justify-content: flex-start; padding-left: 15px; border: 2px solid #303030; border-radius: 4px; background: #151515; color: #3f9fe8; line-height: 30px; }
.viewer { flex: 1; display: flex; min-height: 600px; border-top: 2px solid #000; border-bottom: 2px solid #000; background: #222; box-shadow: inset 0 2px #303030; }
.stage { flex: 1; width: 100%; height: auto; min-width: 0; }
.axis-letter { font: 200 60px "DejaVu Sans Light", "DejaVu Sans", sans-serif; fill: #8b827a; stroke: #8b827a; stroke-width: 2px; }
.viewbar { display: flex; gap: 2px; height: 46px; padding: 3px 4px; border-top: 2px solid #303030; }
.vb { flex: none; height: 37px; }
.viewbar .pick { flex: none; height: 38px; }
.viewbar select { padding-bottom: 1px; }
.vb-on { background: #151515; border: 2px solid #303030; border-radius: 4px; height: 38px; }
.vb-on svg { color: #2d8ceb; }
.vb-off svg { color: #444; }
.vb-dark { background: #1d1d1d; border-radius: 4px; height: 38px; }
.vb-time { width: 138px; height: 38px; border: 2px solid #303030; border-radius: 4px; background: #1d1d1d; color: #8d8d8d; }
.w36 { width: 36px; } .w42 { width: 42px; } .w44 { width: 44px; } .w48 { width: 48px; }
.w136 { width: 136px; } .w142 { width: 142px; } .w174 { width: 174px; } .w216 { width: 216px; }

/* right column */
.side { padding-right: 28px; }
.fold { height: 60px; padding-left: 24px; line-height: 58px; border-bottom: 4px solid #1a1a1a; color: #a0a0a0; }
.fold:first-child { height: 58px; line-height: 54px; }
.presets { border-bottom: 2px solid #1a1a1a; }
.presets-title { display: flex; align-items: center; justify-content: space-between; height: 62px; padding: 0 20px 4px 24px; color: #c6c6c6; font-weight: 600; }
.find { display: flex; align-items: center; height: 40px; margin: 0 10px 4px 12px; padding: 0 6px 0 12px; border: 2px solid #303030; border-radius: 4px; background: #151515; color: #c0c0c0; }
.find input { flex: 1; min-width: 0; padding-left: 8px; }
.find > svg { color: #2d8ceb; }
.tree { border-top: 2px solid #000; border-bottom: 2px solid #000; }
.tree li { display: flex; align-items: center; height: 34px; border-bottom: 2px solid #1e1e1e; color: #919191; line-height: 30px; }
.tree .group { gap: 7px; padding: 0 0 2px 12px; }
.leaf { padding-left: 69px; gap: 9px; }
.badge { width: 24px; height: 20px; margin-top: 7px; background: #b4b4b4; color: #222; font-size: 18px; line-height: 20px; text-align: center; position: relative; }
.badge::before { content: ""; position: absolute; left: 3px; right: 3px; top: -4px; height: 4px; background: linear-gradient(90deg, #b4b4b4 7px, transparent 7px 11px, #b4b4b4 11px); }
.leaf-name { padding: 0 4px; height: 28px; line-height: 27px; }
.leaf-on { background: #333; }
.leaf-on .leaf-name { background: #9d9d9d; color: #222; padding-right: 14px; }
.presets-foot { display: flex; justify-content: flex-end; height: 38px; padding: 3px 12px; border-right: 2px solid #000; }

/* timeline */
.timeline { display: flex; flex-direction: column; background: #282828; border-top: 2px solid #3584d8; border-right: 2px solid #3584d8; margin-right: 2px; }
.tl-tab { display: flex; align-items: center; height: 52px; padding-left: 18px; color: #c6c6c6; }
.tl-name { width: 103px; font-weight: 600; }
.tl-main { display: grid; grid-template-columns: 1184px minmax(0, 1fr) 32px; }
.tl-head { display: flex; height: 72px; }
.clock { width: 204px; padding: 5px 0 0 18px; display: flex; flex-direction: column; color: #1f6299; }
.clock strong { font-size: 34px; line-height: 37px; color: #3f9fe8; }
.clock span { font-size: 22px; line-height: 24px; font-weight: 400; white-space: nowrap; }
.tl-find { display: flex; align-items: center; width: 578px; height: 40px; margin-top: 16px; padding-left: 10px; border: 2px solid #303030; border-radius: 5px; background: #151515; }
.tl-find input { flex: 1; }
.tl-tools { display: grid; grid-template-columns: 67px 67px 67px 38px 65px 72px; padding-left: 14px; }
.layers { width: 100%; table-layout: fixed; border-collapse: separate; border-spacing: 0; }
.c-av { width: 134px; } .c-label { width: 63px; } .c-num { width: 66px; } .c-name { width: 260px; }
.c-sw { width: 274px; } .c-parent { width: 234px; } .c-stretch { width: 122px; }
.layers th { height: 40px; border-top: 2px solid #000; border-bottom: 2px solid #000; background: linear-gradient(#000, #000) 100% 50% / 2px 24px no-repeat #333; font-size: 18px; font-weight: 400; text-align: left; }
.layers th:last-child { background: #333; }
.layers td { height: 34px; border-bottom: 2px solid #242424; background: #2f2f2f; line-height: 30px; }
.layers .sel td { background: #464646; }
.cells { display: flex; gap: 4px; padding-left: 6px; }
.cells > span { width: 26px; height: 26px; display: flex; align-items: center; justify-content: center; }
.layers th:nth-child(5) .cells, .layers td:nth-child(5) .cells { padding-left: 9px; }
.well { background: #202020; }
.sel .well { background: #303030; }
.tag { margin-left: 27px; }
.layers .hash { padding-left: 12px; }
.layers .src, .layers .par { padding-left: 11px; }
.label { display: flex; align-items: center; gap: 9px; padding-left: 9px; }
.chip { width: 24px; height: 24px; }
.layers .num { padding-left: 14px; font-weight: 700; }
.name { display: flex; align-items: center; padding-left: 8px; height: 32px; font-weight: 700; }
.name svg { margin-right: 12px; }
.name span { padding-left: 1px; }
.solid { width: 28px; height: 28px; background: #000; margin: 0 4px 0 -3px; }
.name-on span { flex: 1; height: 32px; line-height: 22px; padding-left: 2px; margin-right: 1px; border: 4px solid #9d9d9d; }
.parent { display: flex; align-items: center; gap: 13px; padding-left: 10px; }
.parent .pick { width: 178px; height: 30px; border: 0; border-radius: 0; }
.layers .stretch { padding-left: 16px; color: #3f9fe8; }

.graph { position: relative; display: flex; flex-direction: column; margin-top: 12px; border-left: 2px solid #000; overflow: hidden; }
.nav, .work { display: flex; background: #1c1c1c; }
.cap { width: 12px; flex: none; background: #2d8ceb; }
.cap-l { margin-right: 2px; border-radius: 10px 0 0 10px; }
.cap-r { margin: 0 2px; border-radius: 0 10px 10px 0; }
.nav { height: 20px; border-top: 2px solid #000; border-bottom: 2px solid #000; }
.nav-bar { flex: 1; background: #666; }
.ruler { height: 38px; padding: 0 16px 0 14px; font-weight: 400; }
.scale { position: relative; height: 100%; }
.scale span { position: absolute; top: 0; width: 80px; height: 38px; margin-left: -40px; line-height: 28px; text-align: center; color: #8d8d8d; background: linear-gradient(#8d8d8d, #8d8d8d) 50% 100% / 2px 15px no-repeat; }
.work { height: 34px; border-top: 2px solid #000; border-bottom: 2px solid #000; }
.work-bar { flex: 1; background: #5f5f5f; border-top: 2px solid #747474; border-bottom: 2px solid #505050; }
.work .cap-l { width: 10px; margin-left: 2px; border-radius: 8px 0 0 8px; }
.work .cap-r { width: 10px; margin-right: 4px; border-radius: 0 8px 8px 0; }
.cache { display: flex; height: 8px; padding: 0 16px 0 14px; border-bottom: 2px solid #000; }
.ram { background: #18bf22; }
.disk { background: #1420bf; }
.lane { height: 34px; padding: 0 16px 0 14px; background: #2f2f2f; border-bottom: 2px solid #242424; }
.lane-on { background: #464646; }
.bar { height: 32px; }
.bar-lilac { background: #757382; border-bottom: 2px solid #64626f; }
.bar-red { background: linear-gradient(#ae4a4c, #a14244 60%, #8f4041); border-top: 2px solid #c98a88; border-left: 2px solid #d9a5a3; }
.lanes-rest { flex: 1; min-height: 216px; padding: 0 16px 0 14px; display: flex; }
.open { flex: 1; background: #353535; margin: 1px 0 2px; }
.over { position: absolute; left: 14px; right: 16px; top: 0; bottom: 0; pointer-events: none; }
.frame { position: absolute; top: 168px; bottom: 2px; background: #4b4b4b; }
.nav-mark { position: absolute; top: 2px; height: 16px; width: 6px; margin-left: -3px; background: linear-gradient(90deg, #999 2px, #2d8ceb 2px 4px, #999 4px); }
.playline { position: absolute; top: 58px; bottom: 0; width: 2px; margin-left: -1px; background: #3a8fe0; }
.playhead { position: absolute; top: 30px; margin-left: -11px; }
.rail { display: flex; flex-direction: column; align-items: flex-end; gap: 12px; padding: 76px 4px 0 0; }
.tl-foot { display: grid; grid-template-columns: 1184px 216px 1fr; background: #222; }
.foot-left, .zoomer { display: flex; align-items: center; height: 34px; border-top: 2px solid #000; background: #282828; }
.foot-left { padding-left: 3px; }
.foot-icon { width: 36px; height: 32px; }
.foot-icon.blue svg { color: #2d8ceb; }
.toggle { width: 268px; height: 31px; margin-left: 416px; border: 2px solid #303030; border-radius: 4px; background: #1a1a1a; color: #a4a4a4; font-size: 21px; font-weight: 400; white-space: nowrap; }
.zoomer { padding-left: 13px; gap: 22px; }
.zoomer input { appearance: none; width: 96px; height: 20px; }
.zoomer input::-webkit-slider-runnable-track { height: 4px; background: #444; }
.zoomer input::-webkit-slider-thumb { appearance: none; width: 20px; height: 20px; margin-top: -8px; border: 3px solid #999; border-radius: 50%; background: #282828; }
```
